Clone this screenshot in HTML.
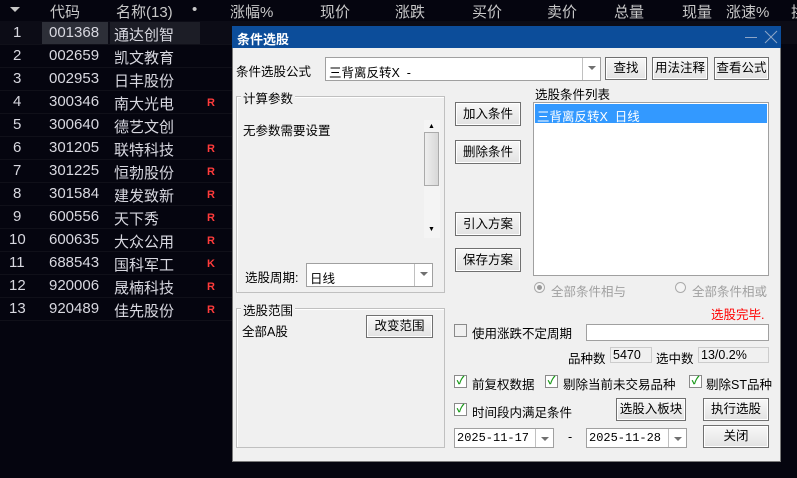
<!DOCTYPE html>
<html><head><meta charset="utf-8"><style>
*{margin:0;padding:0;box-sizing:border-box}
body{width:797px;height:478px;background:#05050f;position:relative;overflow:hidden;font-family:"Liberation Sans","Noto Sans CJK SC",sans-serif}
.a{position:absolute;white-space:nowrap}
.h{color:#c8c8c8;font-size:15px;top:1px}
.r{color:#d8d8e0;font-size:15px}
.R{color:#ff3b3b;font-weight:bold;font-size:11px}
.d{font-size:12.5px;color:#000}
.btn{position:absolute;background:linear-gradient(#f8f8f8,#e2e2e2);border:1px solid #707070;box-shadow:inset 0 0 0 1px #fff;font-size:12.5px;text-align:center;color:#000}
.box{position:absolute;background:#fff;border:1px solid #a0a0a0}
.grp{position:absolute;border:1px solid #c0c0c0;box-shadow:inset 1px 1px 0 #fff}
.lab{position:absolute;background:#f0f0f0;font-size:12.5px;padding:0 2px}
.dd{position:absolute;top:0;bottom:0;right:0;width:18px;border-left:1px solid #c0c0c0}
.dd:after{content:"";position:absolute;left:5px;top:8px;border:4px solid transparent;border-top:4px solid #707070}
.cb{position:absolute;width:13px;height:13px;border:1px solid #8a8a8a;background:#fff;font-size:11px;color:#1a9a1a;line-height:11px;text-align:center;font-weight:bold}
</style></head><body>
<div class="a" style="left:10px;top:7px;border:5px solid transparent;border-top:5px solid #c8c8c8"></div>
<div class="a h" style="left:50px">代码</div>
<div class="a h" style="left:116px">名称(13)</div>
<div class="a h" style="left:192px">•</div>
<div class="a h" style="left:230px">涨幅%</div>
<div class="a h" style="left:320px">现价</div>
<div class="a h" style="left:395px">涨跌</div>
<div class="a h" style="left:472px">买价</div>
<div class="a h" style="left:547px">卖价</div>
<div class="a h" style="left:614px">总量</div>
<div class="a h" style="left:682px">现量</div>
<div class="a h" style="left:726px">涨速%</div>
<div class="a h" style="left:791px">换</div>
<div class="a" style="left:0;top:21px;width:797px;height:23px;background:#0c0c16"></div>
<div class="a" style="left:42px;top:22px;width:66px;height:22px;background:#2d2f38"></div>
<div class="a" style="left:110px;top:22px;width:90px;height:22px;background:#1c1d26"></div>
<div id="rows"></div>
<script>
var d=[["001368","通达创智",""],["002659","凯文教育",""],["002953","日丰股份",""],["300346","南大光电","R"],["300640","德艺文创",""],["301205","联特科技","R"],["301225","恒勃股份","R"],["301584","建发致新","R"],["600556","天下秀","R"],["600635","大众公用","R"],["688543","国科军工","K"],["920006","晟楠科技","R"],["920489","佳先股份","R"]];
var h="";d.forEach(function(r,i){var y=24+i*23;h+='<div class="a r" style="left:'+(i<9?13:9)+'px;top:'+y+'px">'+(i+1)+'</div><div class="a r" style="left:49px;top:'+y+'px">'+r[0]+'</div><div class="a r" style="left:114px;top:'+y+'px">'+r[1]+'</div>';if(r[2])h+='<div class="a R" style="left:207px;top:'+(y+4)+'px">'+r[2]+'</div>';h+='<div class="a" style="left:0;top:'+(y+20)+'px;width:232px;height:1px;background:#101019"></div>';});
document.getElementById("rows").innerHTML=h;
</script>
<div class="a" style="left:232px;top:26px;width:549px;height:436px;background:#f0f0f0;border:1px solid #7a7a7a"></div>
<div class="a" style="left:232px;top:26px;width:549px;height:22px;background:#0c4d9a"></div>
<div class="a" style="left:237px;top:29px;color:#fff;font-size:13px;font-weight:bold">条件选股</div>
<svg class="a" style="left:744px;top:30px" width="34" height="14"><line x1="1" y1="7.5" x2="13" y2="7.5" stroke="#8fa6c8"/><line x1="21" y1="1" x2="33" y2="13" stroke="#8fa6c8"/><line x1="33" y1="1" x2="21" y2="13" stroke="#8fa6c8"/></svg>
<div class="a d" style="left:236px;top:61px">条件选股公式</div>
<div class="box" style="left:325px;top:57px;width:276px;height:24px"><span class="a d" style="left:3px;top:4px">三背离反转X&nbsp;&nbsp;-</span><div class="dd"></div></div>
<div class="btn" style="left:605px;top:57px;width:42px;height:23px;line-height:21px">查找</div>
<div class="btn" style="left:652px;top:57px;width:56px;height:23px;line-height:21px">用法注释</div>
<div class="btn" style="left:714px;top:57px;width:55px;height:23px;line-height:21px">查看公式</div>
<div class="grp" style="left:236px;top:96px;width:209px;height:197px"></div>
<div class="lab" style="left:241px;top:88px">计算参数</div>
<div class="a d" style="left:243px;top:120px">无参数需要设置</div>
<div class="a" style="left:424px;top:120px;width:16px;height:118px;background:#f4f4f4"></div>
<div class="a" style="left:424px;top:132px;width:15px;height:54px;background:linear-gradient(90deg,#eee,#d8d8d8);border:1px solid #aaa"></div>
<div class="a" style="left:428px;top:123px;font-size:7px">▲</div>
<div class="a" style="left:428px;top:226px;font-size:7px">▼</div>
<div class="a d" style="left:245px;top:267px">选股周期:</div>
<div class="box" style="left:306px;top:263px;width:127px;height:24px"><span class="a d" style="left:3px;top:4px">日线</span><div class="dd"></div></div>
<div class="btn" style="left:455px;top:102px;width:66px;height:24px;line-height:22px">加入条件</div>
<div class="btn" style="left:455px;top:140px;width:66px;height:24px;line-height:22px">删除条件</div>
<div class="btn" style="left:455px;top:212px;width:66px;height:24px;line-height:22px">引入方案</div>
<div class="btn" style="left:455px;top:248px;width:66px;height:24px;line-height:22px">保存方案</div>
<div class="a d" style="left:535px;top:84px">选股条件列表</div>
<div class="box" style="left:533px;top:102px;width:236px;height:174px"></div>
<div class="a" style="left:535px;top:104px;width:232px;height:19px;background:#3399ff;color:#fff;font-size:12.5px;padding:2px 2px">三背离反转X&nbsp;&nbsp;日线</div>
<div class="a" style="left:534px;top:282px;width:11px;height:11px;border-radius:50%;border:1px solid #aaa;background:#f4f4f4"><div style="margin:2px;width:5px;height:5px;border-radius:50%;background:#999"></div></div>
<div class="a d" style="left:551px;top:281px;color:#a0a0a0">全部条件相与</div>
<div class="a" style="left:675px;top:282px;width:11px;height:11px;border-radius:50%;border:1px solid #aaa;background:#f4f4f4"></div>
<div class="a d" style="left:692px;top:281px;color:#a0a0a0">全部条件相或</div>
<div class="a d" style="left:711px;top:304px;color:#f00">选股完毕.</div>
<div class="grp" style="left:236px;top:308px;width:209px;height:140px"></div>
<div class="lab" style="left:241px;top:300px">选股范围</div>
<div class="a d" style="left:242px;top:321px">全部A股</div>
<div class="btn" style="left:366px;top:315px;width:67px;height:23px;line-height:21px">改变范围</div>
<div class="cb" style="left:454px;top:324px;background:#f0f0f0"></div>
<div class="a d" style="left:472px;top:323px">使用涨跌不定周期</div>
<div class="box" style="left:586px;top:324px;width:183px;height:17px"></div>
<div class="a d" style="left:568px;top:348px">品种数</div>
<div class="a" style="left:610px;top:347px;width:42px;height:16px;border:1px solid #ccc;font-size:12.5px;padding-left:2px;line-height:14px">5470</div>
<div class="a d" style="left:656px;top:348px">选中数</div>
<div class="a" style="left:698px;top:347px;width:71px;height:16px;border:1px solid #ccc;font-size:12.5px;padding-left:2px;line-height:14px">13/0.2%</div>
<div class="cb" style="left:454px;top:375px">✓</div><div class="a d" style="left:472px;top:374px">前复权数据</div>
<div class="cb" style="left:545px;top:375px">✓</div><div class="a d" style="left:563px;top:374px">剔除当前未交易品种</div>
<div class="cb" style="left:689px;top:375px">✓</div><div class="a d" style="left:706px;top:374px">剔除ST品种</div>
<div class="cb" style="left:454px;top:403px">✓</div><div class="a d" style="left:472px;top:402px">时间段内满足条件</div>
<div class="btn" style="left:616px;top:398px;width:70px;height:23px;line-height:21px">选股入板块</div>
<div class="btn" style="left:703px;top:398px;width:66px;height:23px;line-height:21px">执行选股</div>
<div class="btn" style="left:703px;top:425px;width:66px;height:23px;line-height:21px">关闭</div>
<div class="box" style="left:454px;top:428px;width:100px;height:20px"><span class="a" style="left:2px;top:2px;font-size:12px;font-family:'Liberation Mono',monospace">2025-11-17</span><div class="dd"></div></div>
<div class="a d" style="left:568px;top:430px">-</div>
<div class="box" style="left:586px;top:428px;width:101px;height:20px"><span class="a" style="left:2px;top:2px;font-size:12px;font-family:'Liberation Mono',monospace">2025-11-28</span><div class="dd"></div></div>
</body></html>
